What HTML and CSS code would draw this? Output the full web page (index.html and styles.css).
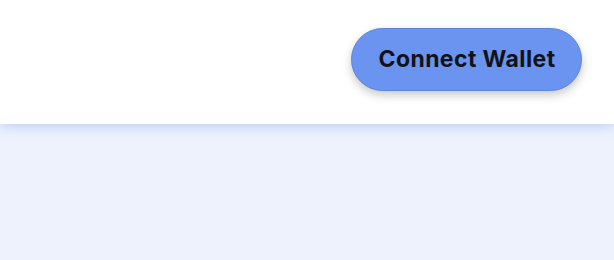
FILE: index.html
```html
<!DOCTYPE html>
<html>
<head>
<meta charset="utf-8">
<link rel="stylesheet" href="styles.css">
</head>
<body>
<header class="header">
  <button class="connect">Connect Wallet</button>
</header>
<main class="main"></main>
</body>
</html>
```
FILE: styles.css
```css
html, body {
  margin: 0;
  padding: 0;
  height: 100%;
}
body {
  background: #eef2fd;
  font-family: Inter, "Noto Sans", sans-serif;
  display: flex;
  flex-direction: column;
}
.header {
  height: 124px;
  background: #ffffff;
  display: flex;
  align-items: flex-start;
  justify-content: flex-end;
  padding: 28px 32px 0 0;
  box-sizing: border-box;
  box-shadow: 0 2px 12px rgba(120, 160, 245, 0.45);
  position: relative;
  z-index: 1;
}
.connect {
  width: 231px;
  height: 63px;
  padding: 0 0 1px 1px;
  border-radius: 32px;
  border: 1px solid #5d84e0;
  background: #6b94f0;
  color: #111318;
  font-family: Inter, "Noto Sans", sans-serif;
  font-weight: 700;
  font-size: 23px;
  letter-spacing: 0.4px;
  box-shadow: 0 4px 10px rgba(0, 0, 0, 0.22);
  cursor: pointer;
}
.main {
  flex: 1;
}
```
